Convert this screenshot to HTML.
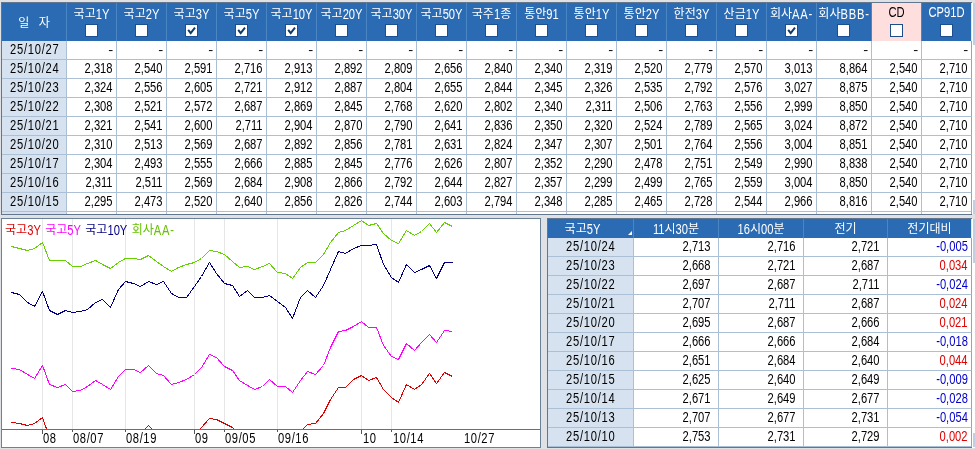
<!DOCTYPE html>
<html lang="ko"><head><meta charset="utf-8"><title>금리</title>
<style>
html,body{margin:0;padding:0}
body{width:975px;height:449px;overflow:hidden;background:#dfe1e5;position:relative;font-family:"Liberation Sans",sans-serif;font-size:13px;color:#000}
.k{display:inline-block;font-family:"Liberation Sans","Noto Sans CJK KR",sans-serif;font-size:14px;line-height:14px;white-space:pre;transform:scaleY(.78);transform-origin:50% 62%}
.l{white-space:nowrap}
#w1,#w2,#ch{will-change:transform}
#w1{position:absolute;left:1px;top:2px;width:970px;height:211px;border:1px solid #62778d;border-right:0;background:#fff;overflow:hidden}
#w2{position:absolute;left:547px;top:218px;width:424px;height:228px;border:1px solid #62778d;border-right:0;background:#fff;overflow:hidden}
table{border-collapse:separate;border-spacing:0;table-layout:fixed}
#t1{width:970px}
#t2{width:424px}
th{background:#2a6bb3;color:#fff;font-weight:normal;padding:0;border-right:1px solid #4a85c4;position:relative;box-sizing:border-box;overflow:hidden;white-space:nowrap}
#t1 th{height:38px}
#t2 th{height:19px}
th.pk{background:#ffdede;color:#000}
td{height:19px;box-sizing:border-box;padding:0 3px 0 0;border-right:1px solid #abbfd5;border-bottom:1px solid #abbfd5;text-align:right;white-space:nowrap;overflow:hidden;line-height:18px}
td b{font-weight:normal;display:inline-block;transform:scale(.86,1.07);transform-origin:100% 50%;position:relative;top:.1px}
td.d{background:#d6e2ef;text-align:center;padding:0 0 0 1px}
td.d b{transform-origin:50% 50%;letter-spacing:.85px}
td b.h{transform:scale(1.15,1)}
#t2 td{padding-right:7px}
#t2 td.d{padding:0 0 0 1px}
#t2 td.z{padding-right:3px}
.neg{color:#0000cc}.pos{color:#dd0000}
#t1 td:last-child,#t2 td:last-child{border-right-color:#93a5bb}
#t1 th:last-child,#t2 th:last-child{border-right-color:#dfe8f2}
tr.x td{height:2px;border-bottom:0;line-height:0;font-size:0}
.hl{position:absolute;left:-10px;right:-10px;top:3px;height:14px;text-align:center;line-height:14px;transform:scale(.86,1.12);transform-origin:50% 50%}
.cb{position:absolute;left:50%;top:21px;margin-left:-7px;width:11px;height:11px;background:#fff;border:1px solid #1b4f8f}
.cb svg{position:absolute;left:0;top:0}
.pk .cb{border-color:#1c4f8a}
#ch{position:absolute;left:1px;top:218px;width:538px;height:228px;border:1px solid #6b8099;background:#fff;overflow:hidden}
#ch svg.c{position:absolute;left:0;top:0}
.ax{position:absolute;top:213px;font-size:13px;line-height:13px;letter-spacing:.7px}
.ax{transform:scale(.86,1.07);transform-origin:0 50%}
#lg{position:absolute;left:3px;top:3px;height:14px;line-height:14px;white-space:nowrap;transform:scale(.86,1.12);transform-origin:0 50%}
#lg i{font-style:normal;display:inline-block;margin-right:5px}
.sb{position:absolute;left:973px;width:2px;background:#c3cee0}
</style></head>
<body>
<div id="w1"><table id="t1"><colgroup><col style="width:65px"><col style="width:50px"><col style="width:50px"><col style="width:50px"><col style="width:50px"><col style="width:50px"><col style="width:50px"><col style="width:50px"><col style="width:50px"><col style="width:50px"><col style="width:50px"><col style="width:50px"><col style="width:50px"><col style="width:50px"><col style="width:50px"><col style="width:50px"><col style="width:55px"><col style="width:50px"><col style="width:50px"></colgroup>
<thead><tr><th><div class="hl" style="top:12px"><span class="k" style="word-spacing:7px">일 자</span></div></th><th><div class="hl"><span class="k">국고</span><span class="l">1Y</span></div><div class="cb"></div></th><th><div class="hl"><span class="k">국고</span><span class="l">2Y</span></div><div class="cb"></div></th><th><div class="hl"><span class="k">국고</span><span class="l">3Y</span></div><div class="cb"><svg width="11" height="11" viewBox="0 0 11 11"><path d="M2.2 4.9 L4.7 8.1 L9 2.6" fill="none" stroke="#103a6c" stroke-width="2"/></svg></div></th><th><div class="hl"><span class="k">국고</span><span class="l">5Y</span></div><div class="cb"><svg width="11" height="11" viewBox="0 0 11 11"><path d="M2.2 4.9 L4.7 8.1 L9 2.6" fill="none" stroke="#103a6c" stroke-width="2"/></svg></div></th><th><div class="hl"><span class="k">국고</span><span class="l">10Y</span></div><div class="cb"><svg width="11" height="11" viewBox="0 0 11 11"><path d="M2.2 4.9 L4.7 8.1 L9 2.6" fill="none" stroke="#103a6c" stroke-width="2"/></svg></div></th><th><div class="hl"><span class="k">국고</span><span class="l">20Y</span></div><div class="cb"></div></th><th><div class="hl"><span class="k">국고</span><span class="l">30Y</span></div><div class="cb"></div></th><th><div class="hl"><span class="k">국고</span><span class="l">50Y</span></div><div class="cb"></div></th><th><div class="hl"><span class="k">국주</span><span class="l">1</span><span class="k">종</span></div><div class="cb"></div></th><th><div class="hl"><span class="k">통안</span><span class="l">91</span></div><div class="cb"></div></th><th><div class="hl"><span class="k">통안</span><span class="l">1Y</span></div><div class="cb"></div></th><th><div class="hl"><span class="k">통안</span><span class="l">2Y</span></div><div class="cb"></div></th><th><div class="hl"><span class="k">한전</span><span class="l">3Y</span></div><div class="cb"></div></th><th><div class="hl"><span class="k">산금</span><span class="l">1Y</span></div><div class="cb"></div></th><th><div class="hl"><span class="k">회사</span><span class="l" style="letter-spacing:.9px">AA-</span></div><div class="cb"><svg width="11" height="11" viewBox="0 0 11 11"><path d="M2.2 4.9 L4.7 8.1 L9 2.6" fill="none" stroke="#103a6c" stroke-width="2"/></svg></div></th><th><div class="hl"><span class="k">회사</span><span class="l" style="letter-spacing:.9px">BBB-</span></div><div class="cb"></div></th><th class="pk"><div class="hl"><span class="l">CD</span></div><div class="cb"></div></th><th><div class="hl"><span class="l">CP91D</span></div><div class="cb"></div></th></tr></thead>
<tbody>
<tr><td class="d"><b>25/10/27</b></td><td><b class="h">-</b></td><td><b class="h">-</b></td><td><b class="h">-</b></td><td><b class="h">-</b></td><td><b class="h">-</b></td><td><b class="h">-</b></td><td><b class="h">-</b></td><td><b class="h">-</b></td><td><b class="h">-</b></td><td><b class="h">-</b></td><td><b class="h">-</b></td><td><b class="h">-</b></td><td><b class="h">-</b></td><td><b class="h">-</b></td><td><b class="h">-</b></td><td><b class="h">-</b></td><td><b class="h">-</b></td><td><b class="h">-</b></td></tr>
<tr><td class="d"><b>25/10/24</b></td><td><b>2,318</b></td><td><b>2,540</b></td><td><b>2,591</b></td><td><b>2,716</b></td><td><b>2,913</b></td><td><b>2,892</b></td><td><b>2,809</b></td><td><b>2,656</b></td><td><b>2,840</b></td><td><b>2,340</b></td><td><b>2,319</b></td><td><b>2,520</b></td><td><b>2,779</b></td><td><b>2,570</b></td><td><b>3,013</b></td><td><b>8,864</b></td><td><b>2,540</b></td><td><b>2,710</b></td></tr>
<tr><td class="d"><b>25/10/23</b></td><td><b>2,324</b></td><td><b>2,556</b></td><td><b>2,605</b></td><td><b>2,721</b></td><td><b>2,912</b></td><td><b>2,887</b></td><td><b>2,804</b></td><td><b>2,655</b></td><td><b>2,844</b></td><td><b>2,345</b></td><td><b>2,326</b></td><td><b>2,535</b></td><td><b>2,792</b></td><td><b>2,576</b></td><td><b>3,027</b></td><td><b>8,875</b></td><td><b>2,540</b></td><td><b>2,710</b></td></tr>
<tr><td class="d"><b>25/10/22</b></td><td><b>2,308</b></td><td><b>2,521</b></td><td><b>2,572</b></td><td><b>2,687</b></td><td><b>2,869</b></td><td><b>2,845</b></td><td><b>2,768</b></td><td><b>2,620</b></td><td><b>2,802</b></td><td><b>2,340</b></td><td><b>2,311</b></td><td><b>2,506</b></td><td><b>2,763</b></td><td><b>2,556</b></td><td><b>2,999</b></td><td><b>8,850</b></td><td><b>2,540</b></td><td><b>2,710</b></td></tr>
<tr><td class="d"><b>25/10/21</b></td><td><b>2,321</b></td><td><b>2,541</b></td><td><b>2,600</b></td><td><b>2,711</b></td><td><b>2,904</b></td><td><b>2,870</b></td><td><b>2,790</b></td><td><b>2,641</b></td><td><b>2,836</b></td><td><b>2,350</b></td><td><b>2,320</b></td><td><b>2,524</b></td><td><b>2,789</b></td><td><b>2,565</b></td><td><b>3,024</b></td><td><b>8,872</b></td><td><b>2,540</b></td><td><b>2,710</b></td></tr>
<tr><td class="d"><b>25/10/20</b></td><td><b>2,310</b></td><td><b>2,513</b></td><td><b>2,569</b></td><td><b>2,687</b></td><td><b>2,892</b></td><td><b>2,856</b></td><td><b>2,781</b></td><td><b>2,631</b></td><td><b>2,824</b></td><td><b>2,347</b></td><td><b>2,307</b></td><td><b>2,501</b></td><td><b>2,764</b></td><td><b>2,556</b></td><td><b>3,004</b></td><td><b>8,851</b></td><td><b>2,540</b></td><td><b>2,710</b></td></tr>
<tr><td class="d"><b>25/10/17</b></td><td><b>2,304</b></td><td><b>2,493</b></td><td><b>2,555</b></td><td><b>2,666</b></td><td><b>2,885</b></td><td><b>2,845</b></td><td><b>2,776</b></td><td><b>2,626</b></td><td><b>2,807</b></td><td><b>2,352</b></td><td><b>2,290</b></td><td><b>2,478</b></td><td><b>2,751</b></td><td><b>2,549</b></td><td><b>2,990</b></td><td><b>8,838</b></td><td><b>2,540</b></td><td><b>2,710</b></td></tr>
<tr><td class="d"><b>25/10/16</b></td><td><b>2,311</b></td><td><b>2,511</b></td><td><b>2,569</b></td><td><b>2,684</b></td><td><b>2,908</b></td><td><b>2,866</b></td><td><b>2,792</b></td><td><b>2,644</b></td><td><b>2,827</b></td><td><b>2,357</b></td><td><b>2,299</b></td><td><b>2,499</b></td><td><b>2,765</b></td><td><b>2,559</b></td><td><b>3,004</b></td><td><b>8,850</b></td><td><b>2,540</b></td><td><b>2,710</b></td></tr>
<tr><td class="d"><b>25/10/15</b></td><td><b>2,295</b></td><td><b>2,473</b></td><td><b>2,520</b></td><td><b>2,640</b></td><td><b>2,856</b></td><td><b>2,826</b></td><td><b>2,744</b></td><td><b>2,603</b></td><td><b>2,794</b></td><td><b>2,348</b></td><td><b>2,285</b></td><td><b>2,465</b></td><td><b>2,728</b></td><td><b>2,544</b></td><td><b>2,966</b></td><td><b>8,816</b></td><td><b>2,540</b></td><td><b>2,710</b></td></tr>
<tr class="x"><td class="d"></td><td></td><td></td><td></td><td></td><td></td><td></td><td></td><td></td><td></td><td></td><td></td><td></td><td></td><td></td><td></td><td></td><td></td><td></td></tr>
</tbody></table></div>
<div class="sb" style="top:3px;height:42px"></div><div class="sb" style="top:200px;height:14px"></div>
<div style="position:absolute;left:972px;top:3px;width:3px;height:211px;background:#fff;z-index:-1"></div>
<div id="ch"><svg class="c" width="538" height="228" viewBox="0 0 538 228">
<rect x="40" y="0" width="1" height="210" fill="#e6e6e6"/><rect x="70" y="0" width="1" height="210" fill="#e6e6e6"/><rect x="123" y="0" width="1" height="210" fill="#e6e6e6"/><rect x="192" y="0" width="1" height="210" fill="#e6e6e6"/><rect x="222" y="0" width="1" height="210" fill="#e6e6e6"/><rect x="275" y="0" width="1" height="210" fill="#e6e6e6"/><rect x="359" y="0" width="1" height="210" fill="#e6e6e6"/><rect x="389" y="0" width="1" height="210" fill="#e6e6e6"/>
<rect x="0" y="210" width="538" height="1" fill="#6e6e6e"/>
<rect x="40" y="211" width="1" height="4" fill="#555"/><rect x="70" y="211" width="1" height="2" fill="#555"/><rect x="123" y="211" width="1" height="2" fill="#555"/><rect x="192" y="211" width="1" height="4" fill="#555"/><rect x="222" y="211" width="1" height="2" fill="#555"/><rect x="275" y="211" width="1" height="2" fill="#555"/><rect x="359" y="211" width="1" height="4" fill="#555"/><rect x="389" y="211" width="1" height="2" fill="#555"/>
<clipPath id="cp"><rect x="0" y="0" width="538" height="210"/></clipPath>
<g clip-path="url(#cp)" fill="none" stroke-width="1" stroke-linejoin="round" shape-rendering="crispEdges">
<polyline stroke="#66d000" points="9.5,27.5 17.5,29.5 25.5,31.5 32.5,29.5 40.5,23.5 47.5,41.5 55.5,41.5 63.5,41.5 70.5,47.5 78.5,47.5 85.5,44.5 93.5,41.5 100.5,45.5 108.5,49.5 116.5,43.5 123.5,39.5 131.5,39.5 138.5,40.5 146.5,36.5 154.5,42.5 161.5,47.5 169.5,52.5 176.5,48.5 184.5,45.5 192.5,43.5 199.5,39.5 207.5,31.5 214.5,32.5 222.5,35.5 230.5,42.5 237.5,48.5 245.5,47.5 252.5,50.5 260.5,47.5 267.5,44.5 275.5,53.5 283.5,54.5 290.5,59.5 298.5,48.5 305.5,43.5 313.5,43.5 321.5,35.5 328.5,23.5 336.5,13.5 343.5,11.5 351.5,6.5 359.5,1.5 366.5,6.5 374.5,4.5 381.5,14.5 389.5,21.5 396.5,24.5 404.5,11.5 412.5,16.5 419.5,12.5 427.5,4.5 434.5,13.5 442.5,3.5 450.5,7.5"/>
<polyline stroke="#000080" points="9.5,73.5 17.5,75.5 25.5,83.5 32.5,87.5 40.5,72.5 47.5,91.5 55.5,95.5 63.5,91.5 70.5,93.5 78.5,92.5 85.5,90.5 93.5,83.5 100.5,80.5 108.5,88.5 116.5,70.5 123.5,62.5 131.5,64.5 138.5,67.5 146.5,62.5 154.5,65.5 161.5,62.5 169.5,74.5 176.5,78.5 184.5,78.5 192.5,67.5 199.5,57.5 207.5,43.5 214.5,54.5 222.5,64.5 230.5,66.5 237.5,77.5 245.5,71.5 252.5,78.5 260.5,78.5 267.5,76.5 275.5,82.5 283.5,88.5 290.5,99.5 298.5,78.5 305.5,71.5 313.5,78.5 321.5,66.5 328.5,50.5 336.5,32.5 343.5,34.5 351.5,29.5 359.5,26.5 366.5,26.5 374.5,25.5 381.5,45.5 389.5,58.5 396.5,63.5 404.5,45.5 412.5,53.5 419.5,50.5 427.5,46.5 434.5,59.5 442.5,43.5 450.5,43.5"/>
<polyline stroke="#ff00ff" points="9.5,149.5 17.5,150.5 25.5,155.5 32.5,159.5 40.5,146.5 47.5,165.5 55.5,168.5 63.5,165.5 70.5,172.5 78.5,171.5 85.5,167.5 93.5,161.5 100.5,165.5 108.5,170.5 116.5,157.5 123.5,150.5 131.5,150.5 138.5,153.5 146.5,146.5 154.5,154.5 161.5,156.5 169.5,165.5 176.5,163.5 184.5,160.5 192.5,155.5 199.5,148.5 207.5,135.5 214.5,138.5 222.5,147.5 230.5,151.5 237.5,161.5 245.5,166.5 252.5,170.5 260.5,167.5 267.5,160.5 275.5,167.5 283.5,167.5 290.5,173.5 298.5,161.5 305.5,152.5 313.5,155.5 321.5,146.5 328.5,128.5 336.5,112.5 343.5,111.5 351.5,107.5 359.5,102.5 366.5,108.5 374.5,108.5 381.5,126.5 389.5,137.5 396.5,140.5 404.5,124.5 412.5,131.5 419.5,123.5 427.5,115.5 434.5,123.5 442.5,111.5 450.5,112.5"/>
<polyline stroke="#dd0000" points="9.5,203.5 17.5,204.5 25.5,206.5 32.5,204.5 40.5,198.5 47.5,218.5 55.5,221.5 63.5,219.5 70.5,222.5 78.5,221.5 85.5,219.5 93.5,217.5 100.5,218.5 108.5,220.5 116.5,216.5 123.5,214.5 131.5,214.5 138.5,214.5 146.5,206.5 154.5,214.5 161.5,217.5 169.5,220.5 176.5,219.5 184.5,218.5 192.5,216.5 199.5,208.5 207.5,199.5 214.5,200.5 222.5,204.5 230.5,208.5 237.5,215.5 245.5,218.5 252.5,220.5 260.5,219.5 267.5,216.5 275.5,219.5 283.5,219.5 290.5,222.5 298.5,212.5 305.5,205.5 313.5,204.5 321.5,194.5 328.5,180.5 336.5,168.5 343.5,168.5 351.5,160.5 359.5,156.5 366.5,161.5 374.5,158.5 381.5,170.5 389.5,178.5 396.5,183.5 404.5,165.5 412.5,170.5 419.5,165.5 427.5,154.5 434.5,164.5 442.5,153.5 450.5,157.5"/>
</g></svg>
<div id="lg"><i style="color:#dd0000"><span class="k">국고</span><span class="l">3Y</span></i><i style="color:#ff00ff"><span class="k">국고</span><span class="l">5Y</span></i><i style="color:#000080"><span class="k">국고</span><span class="l">10Y</span></i><i style="color:#66c000"><span class="k">회사</span><span class="l" style="letter-spacing:.9px">AA-</span></i></div>
<div class="ax" style="left:41px"><span class="l">08</span></div><div class="ax" style="left:71px"><span class="l">08/07</span></div><div class="ax" style="left:124px"><span class="l">08/19</span></div><div class="ax" style="left:193px"><span class="l">09</span></div><div class="ax" style="left:223px"><span class="l">09/05</span></div><div class="ax" style="left:276px"><span class="l">09/16</span></div><div class="ax" style="left:361px"><span class="l">10</span></div><div class="ax" style="left:391px"><span class="l">10/14</span></div><div class="ax" style="left:462px"><span class="l">10/27</span></div>
</div>
<div id="w2"><table id="t2"><colgroup><col style="width:86px"><col style="width:85px"><col style="width:85px"><col style="width:84px"><col style="width:84px"></colgroup>
<thead><tr><th><div class="hl" style="top:2px;right:6px"><span class="k">국고</span><span class="l">5Y</span></div><svg width="4" height="4" style="position:absolute;right:1px;bottom:3px"><path d="M4 0V4H0z" fill="#fff"/></svg></th><th><div class="hl" style="top:2px"><span class="l">11</span><span class="k">시</span><span class="l">30</span><span class="k">분</span></div></th><th><div class="hl" style="top:2px"><span class="l">16</span><span class="k">시</span><span class="l">00</span><span class="k">분</span></div></th><th><div class="hl" style="top:2px"><span class="k">전기</span></div></th><th><div class="hl" style="top:2px"><span class="k">전기대비</span></div></th></tr></thead>
<tbody>
<tr><td class="d"><b>25/10/24</b></td><td><b>2,713</b></td><td><b>2,716</b></td><td><b>2,721</b></td><td class="z neg"><b>-0,005</b></td></tr>
<tr><td class="d"><b>25/10/23</b></td><td><b>2,668</b></td><td><b>2,721</b></td><td><b>2,687</b></td><td class="z pos"><b>0,034</b></td></tr>
<tr><td class="d"><b>25/10/22</b></td><td><b>2,697</b></td><td><b>2,687</b></td><td><b>2,711</b></td><td class="z neg"><b>-0,024</b></td></tr>
<tr><td class="d"><b>25/10/21</b></td><td><b>2,707</b></td><td><b>2,711</b></td><td><b>2,687</b></td><td class="z pos"><b>0,024</b></td></tr>
<tr><td class="d"><b>25/10/20</b></td><td><b>2,695</b></td><td><b>2,687</b></td><td><b>2,666</b></td><td class="z pos"><b>0,021</b></td></tr>
<tr><td class="d"><b>25/10/17</b></td><td><b>2,666</b></td><td><b>2,666</b></td><td><b>2,684</b></td><td class="z neg"><b>-0,018</b></td></tr>
<tr><td class="d"><b>25/10/16</b></td><td><b>2,651</b></td><td><b>2,684</b></td><td><b>2,640</b></td><td class="z pos"><b>0,044</b></td></tr>
<tr><td class="d"><b>25/10/15</b></td><td><b>2,625</b></td><td><b>2,640</b></td><td><b>2,649</b></td><td class="z neg"><b>-0,009</b></td></tr>
<tr><td class="d"><b>25/10/14</b></td><td><b>2,671</b></td><td><b>2,649</b></td><td><b>2,677</b></td><td class="z neg"><b>-0,028</b></td></tr>
<tr><td class="d"><b>25/10/13</b></td><td><b>2,707</b></td><td><b>2,677</b></td><td><b>2,731</b></td><td class="z neg"><b>-0,054</b></td></tr>
<tr><td class="d"><b>25/10/10</b></td><td><b>2,753</b></td><td><b>2,731</b></td><td><b>2,729</b></td><td class="z pos"><b>0,002</b></td></tr>
</tbody></table></div>
<div class="sb" style="top:219px;height:44px"></div><div class="sb" style="top:433px;height:14px"></div>
<div style="position:absolute;left:972px;top:219px;width:3px;height:229px;background:#fff;z-index:-1"></div>
</body></html>
